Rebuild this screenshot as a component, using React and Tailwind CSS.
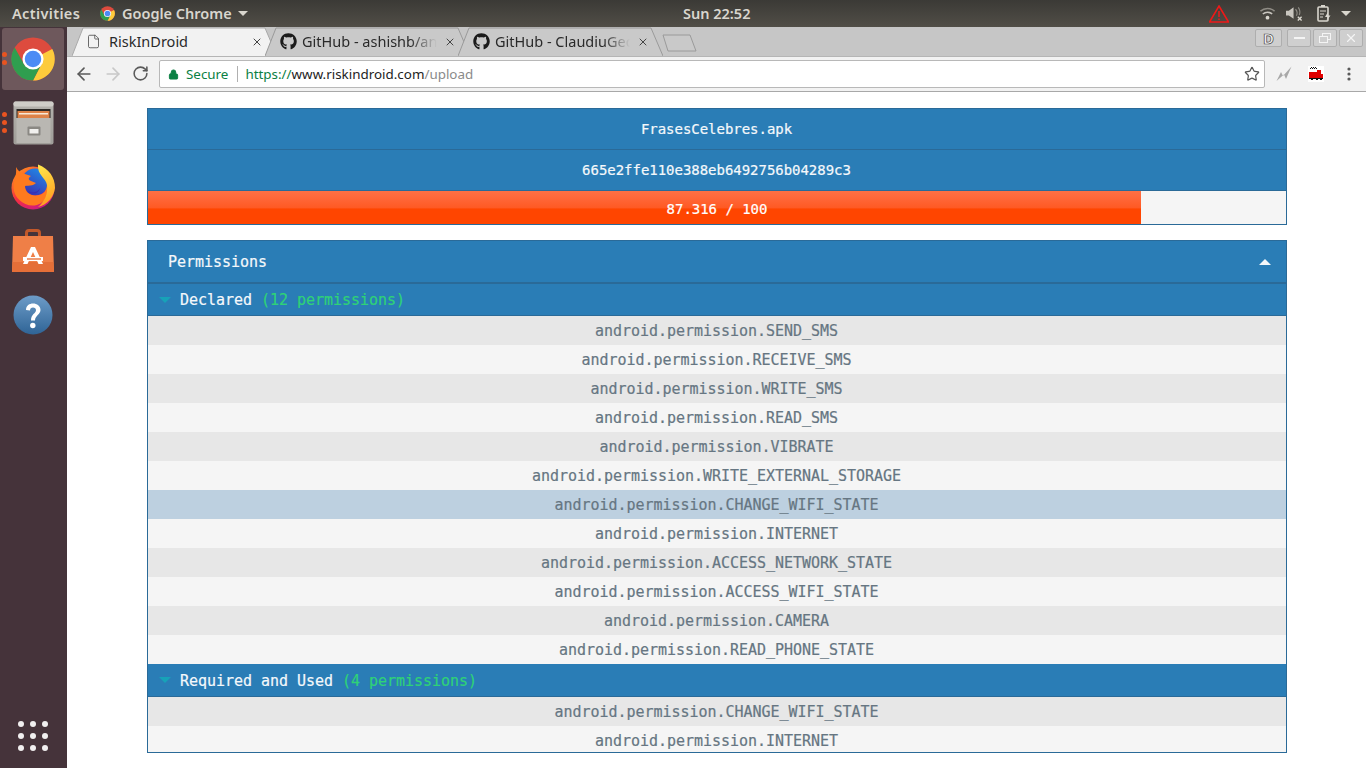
import React from "react";
import { FaGithub } from "react-icons/fa";
import { ArrowLeft, ArrowRight, RotateCw, Star, Lock, X, File } from "lucide-react";

const declared = [
  ["android.permission.SEND_SMS"],
  ["android.permission.RECEIVE_SMS"],
  ["android.permission.WRITE_SMS"],
  ["android.permission.READ_SMS"],
  ["android.permission.VIBRATE"],
  ["android.permission.WRITE_EXTERNAL_STORAGE"],
  ["android.permission.CHANGE_WIFI_STATE", true],
  ["android.permission.INTERNET"],
  ["android.permission.ACCESS_NETWORK_STATE"],
  ["android.permission.ACCESS_WIFI_STATE"],
  ["android.permission.CAMERA"],
  ["android.permission.READ_PHONE_STATE"],
];
const used = ["android.permission.CHANGE_WIFI_STATE", "android.permission.INTERNET"];

function ChromeLogo({ size }) {
  return (
    <svg width={size} height={size} viewBox="0 0 48 48">
      <circle cx="24" cy="24" r="23.5" fill="#dd4b3e" />
      <path d="M24 24 L45 13 A23.5 23.5 0 0 1 24 47.5 L34 28 Z" fill="#fdcb3c" />
      <path d="M24 47.500 A23.500 23.500 0 0 1 4 11.500 L15 31 L24 33 L34 28 Z" fill="#2f9e4f" />
      <circle cx="24" cy="24" r="11.5" fill="#ffffff" />
      <circle cx="24" cy="24" r="9" fill="#4c8bf5" />
    </svg>
  );
}

function FilesIcon() {
  return (
    <svg width="41" height="44" viewBox="0 0 41 44">
      <defs>
        <linearGradient id="fb" x1="0" y1="0" x2="0" y2="1">
          <stop offset="0" stopColor="#b5b3ae" />
          <stop offset="1" stopColor="#a09e99" />
        </linearGradient>
      </defs>
      <rect x="0.500" y="0.500" width="40" height="43" rx="2" fill="url(#fb)" />
      <rect x="0.500" y="0.500" width="40" height="5" rx="2" fill="#cfcdc8" />
      <rect x="3.500" y="8" width="34" height="9" fill="#2b2926" />
      <rect x="4.500" y="10" width="32" height="7" fill="#dd8248" />
      <rect x="6" y="12" width="29" height="1.500" fill="#f7e9d8" />
      <rect x="3.500" y="17" width="34" height="25" fill="#b9b7b2" />
      <rect x="14.500" y="25.500" width="13" height="9" rx="1" fill="#8a8883" />
      <rect x="16.500" y="28" width="9" height="4.500" fill="#f1f0ee" />
    </svg>
  );
}

function FirefoxIcon() {
  return (
    <svg width="44" height="46" viewBox="0 0 44 46">
      <defs>
        <linearGradient id="ffo" x1="0.100" y1="0.100" x2="0.800" y2="1">
          <stop offset="0" stopColor="#ff8f1f" />
          <stop offset="0.450" stopColor="#f6303f" />
          <stop offset="1" stopColor="#c5158d" />
        </linearGradient>
        <linearGradient id="ffb" x1="0.800" y1="0" x2="0.200" y2="1">
          <stop offset="0" stopColor="#1f8de8" />
          <stop offset="1" stopColor="#3b2db0" />
        </linearGradient>
        <linearGradient id="ffy" x1="0.300" y1="0" x2="0.500" y2="1">
          <stop offset="0" stopColor="#ffe54a" />
          <stop offset="1" stopColor="#ff9a1e" />
        </linearGradient>
      </defs>
      <circle cx="22" cy="24" r="21.500" fill="url(#ffo)" />
      <circle cx="24" cy="18" r="13.500" fill="url(#ffb)" />
      <path d="M5 3 C7 7 10 9 14 10 L20 12 C17 14 17 16 20 17 L25 19 C21 23 17 21 14 22 C14 28 20 33 28 31 C33 30 36 26 36 20 C40 28 36 38 26 41 C14 44 3 34 2.500 24 C2.500 16 6 12 5 3 Z" fill="#ff7a1e" />
      <path d="M17 27 C22 30 27 28 29 24 C28 29 22 32 17 27 Z" fill="#3b2db0" />
      <path d="M27 0.500 C38 5 44 13 44 24 C43 33 36 41 27 43 C34 37 37 30 36 21 C35 14 26 11 27 0.500 Z" fill="url(#ffy)" />
    </svg>
  );
}

function StoreIcon() {
  return (
    <svg width="42" height="44" viewBox="0 0 42 44">
      <path d="M14.500 12 V4 a2.500 2.500 0 0 1 2.500-2.500 h8 a2.500 2.500 0 0 1 2.500 2.500 v8" fill="none" stroke="#c2582a" strokeWidth="3" />
      <path d="M1 7 H41 L42 43 H0 Z" fill="#ef7f47" />
      <path d="M0.700 33 H41.300 L42 43 H0 Z" fill="#e56f38" />
      <path d="M19 18 H23 L31 35 H26.500 L21 23 L15.500 35 H11 Z" fill="#fff" />
      <rect x="11" y="28" width="20" height="4" fill="#fff" />
      <rect x="15" y="29.300" width="14" height="1.400" fill="#e8743c" />
    </svg>
  );
}

function HelpIcon() {
  return (
    <svg width="40" height="40" viewBox="0 0 40 40">
      <defs>
        <linearGradient id="hb" x1="0" y1="0" x2="0" y2="1">
          <stop offset="0" stopColor="#6d9cc8" />
          <stop offset="1" stopColor="#2f6496" />
        </linearGradient>
      </defs>
      <circle cx="20" cy="20" r="19.500" fill="url(#hb)" />
      <path d="M13 15 C13 10.500 16.500 8.500 20 8.500 C24 8.500 27.500 11 27.500 15 C27.500 19.500 22 20.500 22 25.500 H18 C18 19 23 18.500 23 15.300 C23 13.500 21.800 12.500 20 12.500 C18.200 12.500 17 13.500 17 15.500 Z" fill="#fff" />
      <circle cx="19.800" cy="30.500" r="2.700" fill="#fff" />
    </svg>
  );
}

function Dot() {
  return <span className="block w-[5px] h-[5px] rounded-full bg-[#e95420]" />;
}

function Launcher() {
  return (
    <aside className="w-[67px] shrink-0 bg-[#45333a] flex flex-col pt-[1px]">
      <div className="ml-[2px] w-[62px] h-[62px] rounded-[3px] bg-[#6e585c] flex items-center justify-center relative">
        <ChromeLogo size={44} />
        <div className="absolute left-0 top-[24px] flex flex-col gap-[3px]">
          <Dot />
          <Dot />
        </div>
      </div>
      <div className="relative w-[66px] h-[64px] mt-[1px] flex items-center justify-center">
        <FilesIcon />
        <div className="absolute left-[2px] top-[21px] flex flex-col gap-[3px]">
          <Dot />
          <Dot />
          <Dot />
        </div>
      </div>
      <div className="w-[66px] h-[64px] flex items-center justify-center"><FirefoxIcon /></div>
      <div className="w-[66px] h-[64px] flex items-center justify-center"><StoreIcon /></div>
      <div className="w-[66px] h-[64px] flex items-center justify-center"><HelpIcon /></div>
      <div className="mt-auto mb-[17px] ml-[18px] grid grid-cols-[6px_6px_6px] gap-[6px]">
        {Array.from({ length: 9 }).map((_, i) => (
          <span key={i} className="block w-[6px] h-[6px] rounded-full bg-[#f1efef]" />
        ))}
      </div>
    </aside>
  );
}

function TopBar() {
  return (
    <header className="h-[27px] shrink-0 bg-gradient-to-b from-[#3b3a36] to-[#514e47] flex items-center text-[14.500px] font-semibold text-[#d9d6ce] relative font-['Noto_Sans',sans-serif]">
      <span className="ml-[12px] w-[88px] tracking-[0.35px]">Activities</span>
      <ChromeLogo size={15} />
      <span className="ml-[7px]">Google Chrome</span>
      <svg className="ml-[6px]" width="10" height="5" viewBox="0 0 10 5"><path d="M0 0H10L5 5Z" fill="#d9d6ce" /></svg>
      <span className="absolute left-[683px] top-[3px]">Sun 22:52</span>
      <div className="ml-auto flex items-center">
        <svg width="20" height="18" viewBox="0 0 20 18" className="mr-[31px]">
          <path d="M10 1 L19.500 17 H0.500 Z" fill="none" stroke="#f01818" strokeWidth="1.500" />
          <path d="M10 6 V12 M10 13.500 V15" stroke="#f01818" strokeWidth="1.500" />
        </svg>
        <svg width="15" height="13" viewBox="0 0 16 13" className="mr-[11px]">
          <path d="M0.500 4 A11 11 0 0 1 15.500 4" fill="none" stroke="#8f8c85" strokeWidth="1.600" />
          <path d="M3 7 A7.500 7.500 0 0 1 13 7" fill="none" stroke="#c9c6bf" strokeWidth="1.600" />
          <circle cx="8" cy="11" r="2" fill="#d9d6ce" />
        </svg>
        <svg width="17" height="15" viewBox="0 0 18 15" className="mr-[14px]">
          <path d="M0 4.500H3L8 1V13L3 9.500H0Z" fill="#c9c6bf" />
          <path d="M10 3C12 5 12 8 11 10 M13 1C15 4 15 7 14 9" fill="none" stroke="#8f8c85" strokeWidth="1.200" />
          <path d="M12.500 11L16.500 15M16.500 11L12.500 15" stroke="#d9d6ce" strokeWidth="1.400" />
        </svg>
        <svg width="14" height="17" viewBox="0 0 14 17" className="mr-[10px]">
          <rect x="1" y="2" width="10" height="14" rx="1" fill="none" stroke="#d9d6ce" strokeWidth="1.600" />
          <rect x="4" y="0" width="4" height="2" fill="#d9d6ce" />
          <path d="M3 6H9M3 9H7M3 12H6" stroke="#d9d6ce" strokeWidth="1.200" />
          <path d="M11 7L8 12H10.500L9.500 16L13.500 10.500H11Z" fill="#d9d6ce" />
        </svg>
        <svg width="10" height="5" viewBox="0 0 10 5" className="mr-[15px]"><path d="M0 0H10L5 5Z" fill="#d9d6ce" /></svg>
      </div>
    </header>
  );
}

function Tab({ title, active, github }) {
  return (
    <div className="relative h-[29px] w-[205px] shrink-0 flex items-center">
      <svg className="absolute inset-0 w-[205px] h-[29px]" viewBox="0 0 205 29">
        <path
          d="M0 29 L11 1 H193 L205 29"
          fill={active ? "#f2f2f2" : "#c9c9c9"}
          stroke={active ? "#a9a9a9" : "#9a9a9a"}
          strokeWidth="1"
        />
      </svg>
      <div className="relative pl-[15px] pr-[14px] flex items-center w-full">
        {github ? (
          <FaGithub size={17} className="text-[#1b1b1b] shrink-0 mr-[5px]" />
        ) : (
          <File size={15} strokeWidth={1.300} className="text-[#4a4a4a] shrink-0 mr-[6px] ml-[-1px]" />
        )}
        <span className={`text-[14.500px] text-[#2a2a2a] whitespace-nowrap overflow-hidden flex-1 w-0 ${github ? "[mask-image:linear-gradient(to_right,black_80%,transparent)]" : "ml-[2px]"}`}>{title}</span>
        <X size={12} strokeWidth={2} className="text-[#444] shrink-0 ml-[7px]" />
      </div>
    </div>
  );
}

function WinBtn({ children, w }) {
  return (
    <div className={`h-[18px] ${w} rounded-[2px] border border-[#aeaeae] bg-[#cfcfcf] flex items-center justify-center text-[#f4f4f4]`}>
      {children}
    </div>
  );
}

function TabStrip() {
  return (
    <div className="h-[29px] shrink-0 bg-[#c6c6c6] flex items-start relative font-['Noto_Sans',sans-serif]">
      <div className="ml-[5px] flex">
        <Tab title="RiskInDroid" active />
        <div className="-ml-[12px]"><Tab title="GitHub - ashishb/android-security" github /></div>
        <div className="-ml-[12px]"><Tab title="GitHub - ClaudiuGeorgiu" github /></div>
      </div>
      <svg width="36" height="18" viewBox="0 0 36 18" className="ml-[-1px] mt-[7px]">
        <path d="M1 1 H28 L34 17 H6 Z" fill="#c9c9c9" stroke="#9a9a9a" />
      </svg>
      <div className="absolute right-[3px] top-[2px] flex items-center">
        <WinBtn w="w-[27px]"><span className="text-[15px] font-bold text-[#f8f8f8] [-webkit-text-stroke:0.7px_#444] leading-none">D</span></WinBtn>
        <div className="w-[5px]" />
        <div className="flex gap-[2px]">
          <WinBtn w="w-[24px]"><span className="block w-[11px] h-[2px] bg-[#f4f4f4]" /></WinBtn>
          <WinBtn w="w-[24px]">
            <svg width="12" height="10" viewBox="0 0 12 10"><rect x="3.500" y="0.500" width="8" height="6" fill="none" stroke="#f4f4f4" /><rect x="0.500" y="3.500" width="8" height="6" fill="#cfcfcf" stroke="#f4f4f4" /></svg>
          </WinBtn>
          <WinBtn w="w-[24px]"><X size={14} strokeWidth={2} /></WinBtn>
        </div>
      </div>
    </div>
  );
}

function Toolbar() {
  return (
    <div className="h-[36px] shrink-0 bg-[#f2f2f2] border-t border-b border-t-[#b5b5b5] border-b-[#a8a8a8] flex items-start font-['Noto_Sans',sans-serif]">
      <ArrowLeft size={20} strokeWidth={2} className="ml-[7px] mt-[7px] text-[#5a5a5a]" />
      <ArrowRight size={20} strokeWidth={2} className="ml-[9px] mt-[7px] text-[#c8c8c8]" />
      <RotateCw size={17} strokeWidth={2.200} className="ml-[9px] mt-[8px] text-[#5a5a5a]" />
      <div className="ml-[10px] mt-[3px] w-[1106px] h-[28px] bg-white border border-[#b8b8b8] rounded-[2px] flex items-center text-[13.400px]">
        <Lock size={11} fill="#0b8043" strokeWidth={2} className="ml-[8px] text-[#0b8043]" />
        <span className="ml-[7px] text-[#0b8043]">Secure</span>
        <span className="ml-[9px] w-px h-[16px] bg-[#b0b0b0]" />
        <span className="ml-[7px] text-[#0b8043]">https://</span>
        <span className="text-[#222]">www.riskindroid.com</span>
        <span className="text-[#8a8a8a]">/upload</span>
        <Star size={16} strokeWidth={1.800} className="ml-auto mr-[4px] text-[#555]" />
      </div>
      <svg width="16" height="16" viewBox="0 0 16 16" className="ml-[11px] mt-[9px]">
        <path d="M0.500 15 L5 6 L7 10 L15.500 0.500 L10 13 L8 8.500 Z" fill="#a8a8a8" />
      </svg>
      <div className="ml-[16px] mt-[9px] w-[16px] h-[16px] bg-white overflow-hidden">
        <svg width="16" height="16" viewBox="0 0 16 16" shapeRendering="crispEdges">
          <path d="M3 1h1v1h-1zM5 1h1v1h-1zM7 1h1v1h-1zM2 2h1v1h-1zM4 2h1v1h-1zM6 2h1v1h-1zM8 2h1v1h-1z" fill="#111" />
          <rect x="1" y="8" width="14" height="4" fill="#e00000" />
          <rect x="1" y="6" width="9" height="2" fill="#e00000" />
          <rect x="9" y="4" width="4" height="4" fill="#e00000" />
          <rect x="1" y="12" width="14" height="1" fill="#111" />
          <rect x="3" y="13" width="2" height="1" fill="#111" />
          <rect x="8" y="13" width="2" height="1" fill="#111" />
          <rect x="12" y="13" width="2" height="1" fill="#111" />
        </svg>
      </div>
      <svg width="4" height="14" viewBox="0 0 4 14" className="ml-[23px] mt-[10px]">
        <circle cx="2" cy="2" r="1.600" fill="#5a5a5a" />
        <circle cx="2" cy="7" r="1.600" fill="#5a5a5a" />
        <circle cx="2" cy="12" r="1.600" fill="#5a5a5a" />
      </svg>
    </div>
  );
}

function Caret({ up }) {
  return (
    <svg width="12" height="6" viewBox="0 0 12 6">
      <path d={up ? "M0 6H12L6 0Z" : "M0 0H12L6 6Z"} fill={up ? "#f3f7fa" : "#17a2b8"} />
    </svg>
  );
}

function SubHeader({ title, count, height }) {
  return (
    <div className={`bg-[#2a7db6] border-b border-[#2a6a98] flex items-center pl-[11px] ${height}`}>
      <Caret />
      <span className="ml-[9px] pt-[2px] text-[#f4f8fb]">{title}</span>
      <span className="ml-[9px] pt-[2px] text-[#2fd277]">({count} permissions)</span>
    </div>
  );
}

function Row({ text, index, hi }) {
  const bg = hi ? "bg-[#bdd0e0]" : index % 2 === 0 ? "bg-[#e7e7e7]" : "bg-[#f5f5f5]";
  return <div className={`h-[29px] shrink-0 flex items-center justify-center pt-[2px] pr-[1px] text-[#667682] ${bg}`}>{text}</div>;
}

function Page() {
  return (
    <main className="flex-1 bg-white pt-[16px] overflow-hidden font-['DejaVu_Sans_Mono',monospace] text-[15px] tracking-[-0.03px] [-webkit-text-stroke:0.2px]">
      <div className="w-[1140px] ml-[80px] border border-[#2a6a98]">
        <div className="h-[41px] bg-[#2a7db6] border-b border-[#2a6a98] flex items-center justify-center pr-[1px] text-[#f4f8fb] text-[14px]">FrasesCelebres.apk</div>
        <div className="h-[41px] bg-[#2a7db6] border-b border-[#2a6a98] flex items-center justify-center pr-[1px] text-[#f4f8fb] text-[14px]">665e2ffe110e388eb6492756b04289c3</div>
        <div className="relative h-[33px] bg-[#f5f5f5] flex items-center justify-center pt-[4px]">
          <div className="absolute left-0 top-0 bottom-0 w-[993px] bg-[linear-gradient(to_bottom,#ff7043_0%,#ff6a3d_15%,#ff5a24_50%,#ff4500_55%,#ff4500_100%)]" />
          <span className="relative text-white text-[14px]">87.316 / 100</span>
        </div>
      </div>
      <div className="w-[1140px] h-[513px] ml-[80px] mt-[15px] border border-[#2a6a98] overflow-hidden">
        <div className="h-[43px] bg-[#2a7db6] border-b-2 border-[#2a6a98] flex items-center justify-between pl-[20px] pr-[15px] text-[#f4f8fb]">
          <span className="pt-[2px]">Permissions</span>
          <Caret up />
        </div>
        <SubHeader title="Declared" count={12} height="h-[32px]" />
        {declared.map(([t, hi], i) => <Row key={i} text={t} index={i} hi={hi} />)}
        <SubHeader title="Required and Used" count={4} height="h-[33px]" />
        {used.map((t, i) => <Row key={i} text={t} index={i} />)}
      </div>
    </main>
  );
}

export default function App() {
  return (
    <div className="w-[1366px] h-[768px] flex flex-col overflow-hidden">
      <TopBar />
      <div className="flex-1 flex min-h-0">
        <Launcher />
        <div className="flex-1 flex flex-col min-w-0">
          <TabStrip />
          <Toolbar />
          <Page />
        </div>
      </div>
    </div>
  );
}
